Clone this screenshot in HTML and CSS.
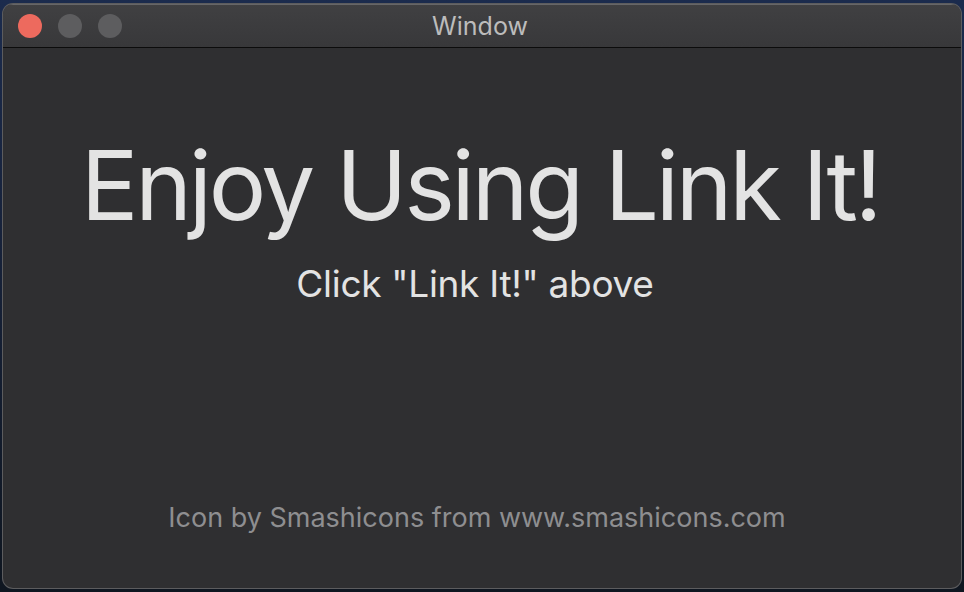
FILE: index.html
```html
<!DOCTYPE html>
<html>
<head>
<meta charset="utf-8">
<link rel="stylesheet" href="styles.css">
</head>
<body>
<div class="window">
  <div class="titlebar">
    <div class="lights">
      <span class="light close"></span>
      <span class="light"></span>
      <span class="light"></span>
    </div>
    <div class="title">Window</div>
  </div>
  <div class="content">
    <h1 class="headline">Enjoy Using Link It!</h1>
    <p class="sub">Click "Link It!" above</p>
    <div class="spacer"></div>
    <p class="credit">Icon by Smashicons from www.smashicons.com</p>
  </div>
</div>
</body>
</html>
```
FILE: styles.css
```css
html, body {
  margin: 0;
  height: 100%;
}
body {
  background: linear-gradient(#1b2b4d 0%, #17223a 40%, #0f1620 100%);
  padding: 4px 3px 4px 3px;
  box-sizing: border-box;
  font-family: Inter, "Noto Sans", sans-serif;
}
.window {
  height: 584px;
  border-radius: 10px;
  background: #2f2f31;
  box-shadow: 0 0 0 1px #5c5c5e;
  overflow: hidden;
  display: flex;
  flex-direction: column;
}
.titlebar {
  height: 42px;
  background: linear-gradient(#404042, #38383a);
  border-top: 1px solid #666668;
  border-bottom: 1px solid #0c0c0c;
  display: flex;
  align-items: center;
  position: relative;
}
.lights {
  display: flex;
  gap: 16px;
  padding-left: 15px;
}
.light {
  width: 24px;
  height: 24px;
  border-radius: 50%;
  background: #5d5d5f;
}
.light.close {
  background: #ed6a5e;
}
.title {
  position: absolute;
  left: 0;
  right: 4px;
  text-align: center;
  color: #bcbcbc;
  font-size: 25px;
  pointer-events: none;
}
.content {
  flex: 1;
  display: flex;
  flex-direction: column;
  align-items: center;
  color: #e3e3e3;
}
.headline {
  margin: 82px 0 0;
  padding-right: 4px;
  font-weight: 400;
  font-size: 96px;
  line-height: 110px;
  letter-spacing: -3.2px;
}
.sub {
  margin: 22px 14px 0 0;
  font-size: 37px;
  line-height: 44px;
  letter-spacing: -0.3px;
}
.spacer {
  flex: 1;
}
.credit {
  margin: 0 10px 53px 0;
  font-size: 27px;
  line-height: 34px;
  color: #8e8e90;
}
```
